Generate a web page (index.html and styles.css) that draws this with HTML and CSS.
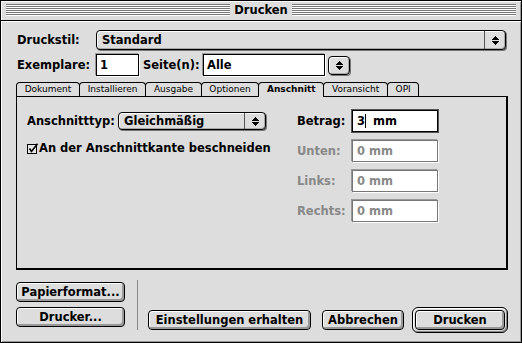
FILE: index.html
```html
<!DOCTYPE html>
<html lang="de">
<head>
    <meta charset="UTF-8">
    <title>Drucken</title>
    <link rel="stylesheet" href="styles.css">
</head>
<body>
<div class="window">
    <div class="titlebar">
        <span class="stripes"></span>
        <span class="title">Drucken</span>
        <span class="stripes"></span>
    </div>

    <div class="content">
        <div class="row">
            <span class="label">Druckstil:</span>
            <div class="popup popup-wide">
                <span class="popup-text">Standard</span>
                <span class="popup-arrow">
                    <svg width="7" height="9" viewBox="0 0 7 9" shape-rendering="crispEdges"><path d="M3 0h1v1H3zM2 1h3v1H2zM1 2h5v1H1zM0 3h7v1H0zM0 5h7v1H0zM1 6h5v1H1zM2 7h3v1H2zM3 8h1v1H3z"/></svg>
                </span>
            </div>
        </div>

        <div class="row row-copies">
            <span class="label">Exemplare:</span>
            <div class="field field-copies">1</div>
            <span class="label-pages">Seite(n):</span>
            <div class="field field-pages">Alle</div>
            <div class="stepper">
                <svg width="7" height="9" viewBox="0 0 7 9" shape-rendering="crispEdges"><path d="M3 0h1v1H3zM2 1h3v1H2zM1 2h5v1H1zM0 3h7v1H0zM0 5h7v1H0zM1 6h5v1H1zM2 7h3v1H2zM3 8h1v1H3z"/></svg>
            </div>
        </div>

        <ul class="tabs">
            <li>Dokument</li>
            <li>Installieren</li>
            <li>Ausgabe</li>
            <li>Optionen</li>
            <li class="active">Anschnitt</li>
            <li>Voransicht</li>
            <li>OPI</li>
        </ul>

        <div class="panel">
            <div class="panel-left">
                <div class="bleed-type">
                    <span class="label-type">Anschnitttyp:</span>
                    <div class="popup popup-type">
                        <span class="popup-text">Gleichmäßig</span>
                        <span class="popup-arrow">
                            <svg width="7" height="9" viewBox="0 0 7 9" shape-rendering="crispEdges"><path d="M3 0h1v1H3zM2 1h3v1H2zM1 2h5v1H1zM0 3h7v1H0zM0 5h7v1H0zM1 6h5v1H1zM2 7h3v1H2zM3 8h1v1H3z"/></svg>
                        </span>
                    </div>
                </div>
                <div class="check">
                    <svg width="12" height="11" viewBox="0 0 12 11">
                        <rect x="0.5" y="1.5" width="9" height="9" fill="#e6e6e6" stroke="#000"/>
                        <path d="M2.5 5.5 L4.5 8.5 L10.5 0.8" fill="none" stroke="#000" stroke-width="1.6"/>
                    </svg>
                    <span>An der Anschnittkante beschneiden</span>
                </div>
            </div>

            <div class="panel-right">
                <span>Betrag:</span>
                <div class="field field-size field-focus">3<span class="caret"></span> mm</div>
                <span class="disabled">Unten:</span>
                <div class="field field-size disabled">0 mm</div>
                <span class="disabled">Links:</span>
                <div class="field field-size disabled">0 mm</div>
                <span class="disabled">Rechts:</span>
                <div class="field field-size disabled">0 mm</div>
            </div>
        </div>

        <div class="footer">
            <div class="footer-left">
                <button class="btn">Papierformat...</button>
                <button class="btn">Drucker...</button>
            </div>
            <span class="separator"></span>
            <div class="footer-right">
                <button class="btn btn-keep">Einstellungen erhalten</button>
                <button class="btn btn-cancel">Abbrechen</button>
                <div class="default-ring">
                    <button class="btn btn-print">Drucken</button>
                </div>
            </div>
        </div>
    </div>
</div>
</body>
</html>
```

FILE: styles.css
```css
body {
    margin: 0;
    padding: 0;
    background-color: #dddddd;
    font-family: "DejaVu Sans", "Liberation Sans", sans-serif;
    font-weight: bold;
    font-size: 11.5px;
    color: #000;
}

.window {
    width: 522px;
    height: 343px;
    box-sizing: border-box;
    border: 1px solid #000;
    background-color: #dddddd;
    display: flex;
    flex-direction: column;
}

/* title bar */

.titlebar {
    height: 20px;
    box-sizing: border-box;
    padding: 3px 5px 0 5px;
    display: flex;
    border-bottom: 1px solid #000;
    box-shadow: inset 1px 1px 0 #fff, inset -1px 0 0 #999;
}

.stripes {
    flex: 1;
    height: 12px;
    background: repeating-linear-gradient(to bottom, #777 0, #777 1px, #fff 1px, #fff 2px);
}

.title {
    padding: 0 4px;
    line-height: 12px;
}

/* dialog body */

.content {
    flex: 1;
    padding: 9px 15px 0 16px;
    box-shadow: inset 1px 1px 0 #fff, inset -1px -1px 0 #999;
}

.row {
    display: flex;
    align-items: center;
    height: 20px;
}

.label {
    width: 79px;
    flex: none;
}

.popup {
    display: flex;
    height: 20px;
    box-sizing: border-box;
    border: 1px solid #000;
    border-radius: 4px;
    background-color: #dddddd;
    box-shadow: 1px 1px 0 #777, inset 1px 1px 0 #fff, inset -1px -1px 0 #aaa;
}

.popup-wide {
    flex: 1;
}

.popup-text {
    flex: 1;
    padding-left: 5px;
    line-height: 18px;
}

.popup-arrow {
    width: 20px;
    border-left: 1px solid #555;
    display: flex;
    align-items: center;
    justify-content: center;
}

.row-copies {
    margin-top: 4px;
    height: 22px;
}

.field {
    height: 22px;
    box-sizing: border-box;
    border: 1px solid #000;
    background-color: #fff;
    padding: 0 3px;
    line-height: 20px;
    white-space: pre;
    box-shadow: -1px -1px 0 #999, 1px 1px 0 #fff;
}

.field-copies {
    width: 43px;
}

.label-pages {
    width: 60px;
    margin-left: 4px;
}

.field-pages {
    width: 122px;
}

.stepper {
    width: 22px;
    height: 19px;
    margin-left: 3px;
    box-sizing: border-box;
    border: 1px solid #000;
    border-radius: 4px;
    display: flex;
    align-items: center;
    justify-content: center;
    box-shadow: 1px 1px 0 #777, inset 1px 1px 0 #fff, inset -1px -1px 0 #aaa;
}

/* tabs */

.tabs {
    display: flex;
    list-style-type: none;
    margin: 6px 0 0 -1px;
    padding: 0;
    height: 14px;
    font-size: 9px;
    font-weight: normal;
}

.tabs li {
    height: 14px;
    box-sizing: border-box;
    border: 1px solid #000;
    border-bottom: none;
    border-radius: 4px 4px 0 0;
    padding: 0 7.7px;
    margin-left: -1px;
    line-height: 13px;
    background-color: #dddddd;
}

.tabs li:first-child {
    margin-left: 0;
}

.tabs li.active {
    height: 15px;
    font-weight: bold;
    position: relative;
    z-index: 1;
}

.panel {
    height: 174px;
    box-sizing: border-box;
    border: solid #000;
    border-width: 1px 2px 2px 1px;
    margin: 0 -2px 0 -1px;
    padding: 13px 0 0 10px;
    display: flex;
}

.panel-left {
    width: 270px;
}

.bleed-type {
    display: flex;
    align-items: center;
    height: 22px;
}

.label-type {
    width: 91px;
}

.popup-type {
    width: 148px;
    height: 18px;
}

.popup-type .popup-text {
    line-height: 16px;
}

.check {
    display: flex;
    align-items: center;
    margin-top: 9px;
}

.panel-right {
    display: grid;
    grid-template-columns: 55px 86px;
    grid-auto-rows: 22px;
    row-gap: 8px;
    align-items: center;
}

.field-size {
    width: 86px;
    padding-left: 4px;
}

.field-focus {
    box-shadow: 0 0 0 1px #555;
}

.caret {
    display: inline-block;
    width: 1px;
    height: 14px;
    background-color: #000;
    vertical-align: middle;
    margin: -2px 3px 0 0;
}

.disabled {
    color: #888;
}

.field.disabled {
    border-color: #777;
}

/* buttons */

.footer {
    display: flex;
    margin: 12px -2px 0 -1px;
}

.footer-left {
    display: flex;
    flex-direction: column;
    gap: 5px;
    width: 109px;
}

.btn {
    height: 20px;
    box-sizing: border-box;
    border: 1px solid #000;
    border-radius: 4px;
    background-color: #dddddd;
    font: inherit;
    color: #000;
    padding: 0;
    line-height: 17px;
    box-shadow: inset 1px 1px 0 #fff, inset -2px -2px 0 #999;
}

.separator {
    width: 1px;
    height: 50px;
    background-color: #888;
    margin: -2px 10px 0 12px;
}

.footer-right {
    display: flex;
    align-items: center;
    align-self: flex-end;
    margin-bottom: -3px;
}

.btn-keep {
    width: 163px;
}

.btn-cancel {
    width: 82px;
    margin-left: 11px;
}

.default-ring {
    width: 96px;
    height: 26px;
    box-sizing: border-box;
    margin-left: 8px;
    border: 1px solid #000;
    border-radius: 6px;
    padding: 2px;
    box-shadow: inset 1px 1px 0 #fff, inset -1px -1px 0 #888;
}

.btn-print {
    width: 100%;
}
```
